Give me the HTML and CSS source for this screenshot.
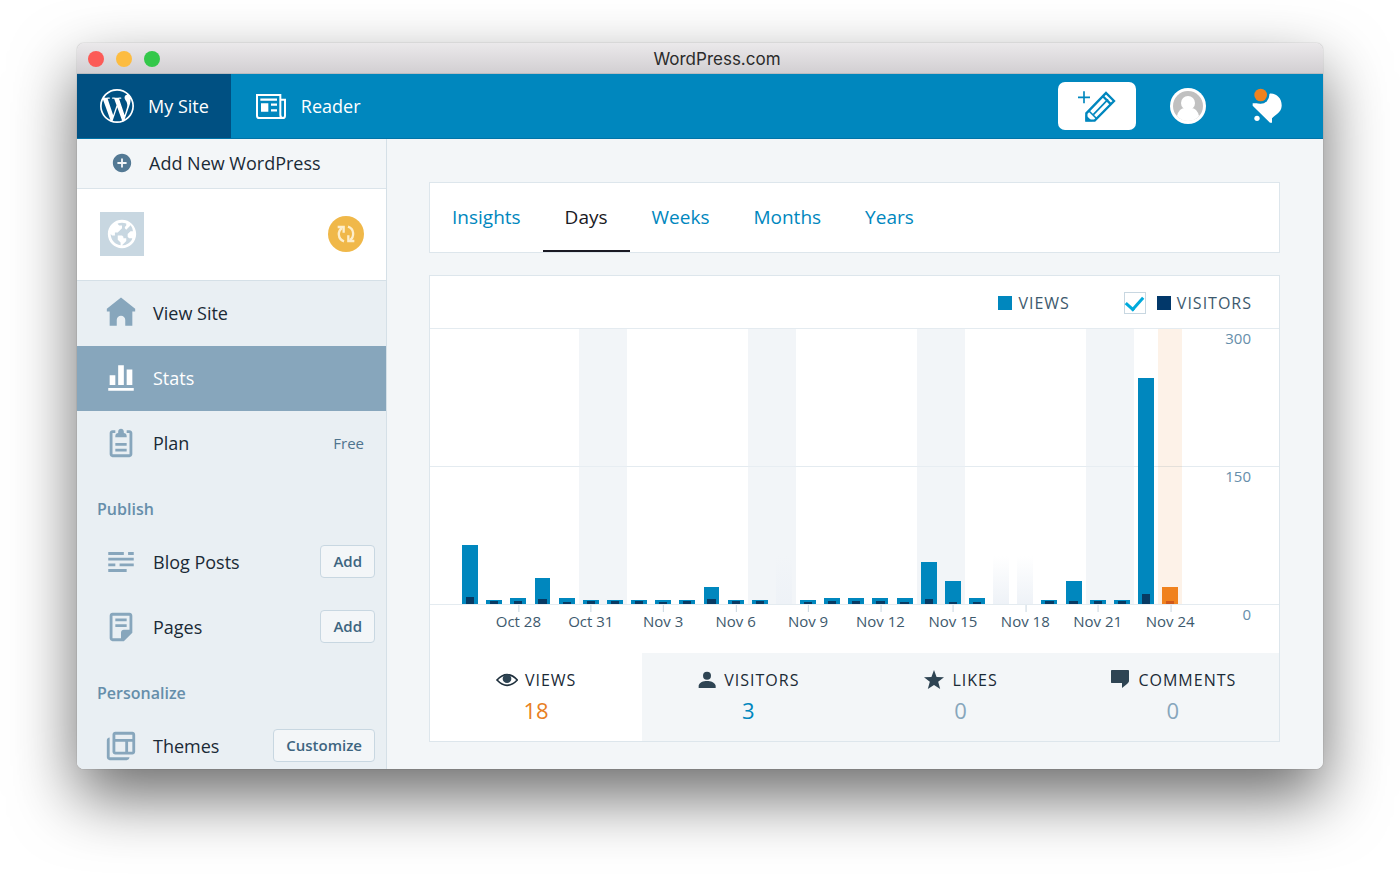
FILE: index.html
```html
<!DOCTYPE html>
<html lang="en">
<head>
    <meta charset="UTF-8">
    <meta name="viewport" content="width=device-width, initial-scale=1.0">
    <title>WordPress.com</title>
    <link rel="stylesheet" href="styles.css">
</head>
<body>
    <div class="window">
        <div class="titlebar">
            <div class="lights">
                <span class="light red"></span>
                <span class="light yellow"></span>
                <span class="light green"></span>
            </div>
            <div class="window-title">WordPress.com</div>
        </div>

        <header class="masterbar">
            <a href="#" class="master-item active">
                <svg width="34" height="34" viewBox="2 2 20 20" fill="currentColor"><path d="M12 2C6.486 2 2 6.486 2 12s4.486 10 10 10 10-4.486 10-10S17.514 2 12 2zM3.01 12c0-1.304.28-2.541.78-3.659l4.29 11.753C5.078 18.636 3.01 15.559 3.01 12zm8.99 8.99c-.882 0-1.734-.13-2.54-.366l2.697-7.838 2.763 7.57c.018.044.04.085.064.124-.934.33-1.937.51-2.984.51zm1.237-13.2c.542-.028 1.03-.085 1.03-.085.485-.057.428-.77-.056-.742 0 0-1.456.114-2.396.114-.883 0-2.37-.113-2.37-.113-.483-.03-.54.712-.055.74 0 0 .457.058.94.086l1.397 3.828-1.962 5.883-3.265-9.71c.54-.03 1.027-.086 1.027-.086.484-.057.427-.77-.057-.742 0 0-1.456.114-2.396.114-.168 0-.367-.005-.578-.01C6.1 4.63 8.864 3.01 12 3.01c2.34 0 4.47.895 6.07 2.36-.04-.003-.077-.008-.118-.008-.883 0-1.51.77-1.51 1.596 0 .74.428 1.368.883 2.11.34.6.74 1.37.74 2.48 0 .77-.297 1.663-.685 2.908l-.898 3.002-3.245-9.668zm3.28 11.98l2.745-7.937c.513-1.283.684-2.308.684-3.22 0-.33-.022-.638-.06-.924.701 1.28 1.1 2.75 1.1 4.31 0 3.313-1.796 6.207-4.469 7.77z"/></svg>
                <span>My Site</span>
            </a>
            <a href="#" class="master-item">
                <svg width="30" height="25" viewBox="0 0 90 75" fill="none" stroke="currentColor" stroke-width="6">
                    <path d="M3 3h70v59q0 10 8 10h-71q-7 0-7-7zM73 17h14v48q0 7-7 7"/>
                    <path d="M13 17h50M45 32h18M45 49h18" stroke-width="7"/>
                    <path d="M15 28h22v25h-22z" fill="currentColor" stroke="none"/>
                </svg>
                <span>Reader</span>
            </a>
            <div class="master-actions">
                <button type="button" class="new-post" aria-label="New post">
                    <svg width="40" height="34" viewBox="170 160 120 102" fill="none" stroke="currentColor" stroke-width="6">
                        <path d="M191 167v36M173 185h36" stroke-width="5"/>
                        <path d="M198 255v-22l59-61 24 24-58 59z" stroke-width="7"/>
                        <path d="M206 226l24 24" stroke-width="5"/>
                        <path d="M219 237l44-46" stroke-width="5"/>
                        <path d="M247 181l25 25" stroke-width="7"/>
                        <path d="M196 238l20 19h-20z" fill="currentColor" stroke="none"/>
                    </svg>
                </button>
                <a href="#" class="avatar" aria-label="My profile">
                    <svg width="36" height="36" viewBox="0 0 36 36">
                        <circle cx="18" cy="18" r="18" fill="#fff"/>
                        <circle cx="18" cy="18" r="15" fill="#c0c0c0"/>
                        <circle cx="18" cy="15" r="7" fill="#fff"/>
                        <path d="M7 28q2-8 8-8h6q6 0 8 8-4 5-11 5t-11-5z" fill="#fff"/>
                    </svg>
                </a>
                <a href="#" class="bell" aria-label="Notifications">
                    <svg width="30" height="36" viewBox="694 150 90 108">
                        <path d="M747 167C768 165 784 182 783 204C782 224 764 230 754 241V254H748L696 203V196H720Z" fill="#fff"/>
                        <circle cx="709" cy="241" r="8" fill="#fff"/>
                        <circle cx="720" cy="171" r="26" fill="#0087be"/>
                        <circle cx="720" cy="171" r="19" fill="#f0821e"/>
                    </svg>
                </a>
            </div>
        </header>

        <div class="layout">
            <aside class="sidebar">
                <a href="#" class="add-new">
                    <svg width="22" height="22" viewBox="0 0 24 24" fill="#537994"><path d="M12 2C6.477 2 2 6.477 2 12s4.477 10 10 10 10-4.477 10-10S17.523 2 12 2zm5 11h-4v4h-2v-4H7v-2h4V7h2v4h4v2z"/></svg>
                    <span>Add New WordPress</span>
                </a>
                <div class="site">
                    <div class="site-icon">
                        <svg width="34" height="34" viewBox="0 0 24 24" fill="#fff"><path d="M12 2C6.477 2 2 6.477 2 12s4.477 10 10 10 10-4.477 10-10S17.523 2 12 2zm0 18l2-2 1-1v-2h-2v-1l-1-1H9v3l2 2v1.931C7.06 19.436 4 16.072 4 12l1 1h2v-2h2l3-3V6h-2L9 5v-.411a7.945 7.945 0 016 0V6l-1 1v1l1 1 3.13-3.13A7.983 7.983 0 0119.736 10H18l-2 2v2l1 1h2l.286.286C18.029 18.061 15.239 20 12 20z"/></svg>
                    </div>
                    <button type="button" class="sync" aria-label="Sync">
                        <svg width="20" height="20" viewBox="798 102 60 60" fill="none" stroke="#fdeecb" stroke-width="7">
                            <path d="M822 154C802 147 803 123 816 114M834 110C854 117 853 141 840 150"/>
                            <path d="M803 111h18v17M853 153h-18v-17"/>
                        </svg>
                    </button>
                </div>
                <nav>
                    <ul class="menu">
                        <li>
                            <a href="#">
                                <svg viewBox="0 0 24 24"><path d="M22 9L12 1 2 9v2h2v10h5v-4c0-1.657 1.343-3 3-3s3 1.343 3 3v4h5V11h2V9z"/></svg>
                                View Site
                            </a>
                        </li>
                        <li class="selected">
                            <a href="#">
                                <svg viewBox="0 0 24 24"><path d="M21 21H3v-2h18v2zM8 10H4v7h4v-7zm6-7h-4v14h4V3zm6 3h-4v11h4V6z"/></svg>
                                Stats
                            </a>
                        </li>
                        <li>
                            <a href="#">
                                <svg viewBox="0 0 24 24"><path d="M16 18H8v-2h8v2zm0-6H8v2h8v-2zm2-9h-2v2h2v15H6V5h2V3H6c-1.105 0-2 .895-2 2v15c0 1.105.895 2 2 2h12c1.105 0 2-.895 2-2V5c0-1.105-.895-2-2-2zm-4 2V4c0-1.105-.895-2-2-2s-2 .895-2 2v1c-1.105 0-2 .895-2 2v1h8V7c0-1.105-.895-2-2-2z"/></svg>
                                Plan
                            </a>
                            <span class="plan-name">Free</span>
                        </li>
                    </ul>
                    <h2>Publish</h2>
                    <ul class="menu">
                        <li>
                            <a href="#">
                                <svg viewBox="0 0 24 24"><path d="M3 5h11v2H3zM17 5h4v2h-4zM3 9h18v2H3zM3 13h5v2H3zM11 13h10v2H11zM3 17h13v2H3z"/></svg>
                                Blog Posts
                            </a>
                            <button type="button" class="small-btn">Add</button>
                        </li>
                        <li>
                            <a href="#">
                                <svg viewBox="0 0 24 24"><path d="M16 8H8V6h8v2zm0 2H8v2h8v-2zm4-6v12l-6 6H6c-1.105 0-2-.895-2-2V4c0-1.105.895-2 2-2h12c1.105 0 2 .895 2 2zm-2 10V4H6v16h6v-4c0-1.105.895-2 2-2h4z"/></svg>
                                Pages
                            </a>
                            <button type="button" class="small-btn">Add</button>
                        </li>
                    </ul>
                    <h2>Personalize</h2>
                    <ul class="menu">
                        <li>
                            <a href="#">
                                <svg viewBox="0 0 24 24"><path d="M4 6c-1.105 0-2 .895-2 2v12c0 1.1.9 2 2 2h12c1.105 0 2-.895 2-2H4V6zm16-4H8c-1.105 0-2 .895-2 2v12c0 1.105.895 2 2 2h12c1.105 0 2-.895 2-2V4c0-1.105-.895-2-2-2zm-5 14H8V9h7v7zm5 0h-3V9h3v7zm0-9H8V4h12v3z"/></svg>
                                Themes
                            </a>
                            <button type="button" class="small-btn">Customize</button>
                        </li>
                    </ul>
                </nav>
            </aside>

            <main>
                <nav class="card tabs">
                    <a href="#">Insights</a>
                    <a href="#" class="current">Days</a>
                    <a href="#">Weeks</a>
                    <a href="#">Months</a>
                    <a href="#">Years</a>
                </nav>

                <section class="card">
                    <div class="legend">
                        <span class="legend-item"><i class="swatch"></i>Views</span>
                        <label class="legend-item">
                            <input type="checkbox" checked>
                            <i class="swatch dark"></i>Visitors
                        </label>
                    </div>

                    <div class="chart">
                        <div class="columns" id="columns"></div>
                        <div class="y-axis">
                            <span>300</span>
                            <span>150</span>
                            <span>0</span>
                        </div>
                    </div>

                    <div class="summary">
                        <a href="#" class="current">
                            <span class="name">
                                <svg width="22" height="22" viewBox="213 414 66 66"><path d="M216 447Q246 415 277 447Q246 479 216 447Z" fill="none" stroke="#1f303d" stroke-width="5"/><circle cx="246" cy="443" r="13" fill="#2e4453"/></svg>
                                Views
                            </span>
                            <span class="value">18</span>
                        </a>
                        <a href="#">
                            <span class="name">
                                <svg width="20" height="22" viewBox="819 414 60 66" fill="#2e4453"><circle cx="849" cy="434" r="12"/><path d="M824 471V464C826 454 838 450 849 450S872 454 875 464V471Z"/></svg>
                                Visitors
                            </span>
                            <span class="value">3</span>
                        </a>
                        <a href="#">
                            <span class="name">
                                <svg width="22" height="22" viewBox="1 1 22 22" fill="#2e4453"><path d="M12 2l2.582 6.953L22 9.257l-5.822 4.602L18.18 21 12 16.89 5.82 21l2.002-7.14L2 9.256l7.418-.304"/></svg>
                                Likes
                            </span>
                            <span class="value none">0</span>
                        </a>
                        <a href="#">
                            <span class="name">
                                <svg width="22" height="22" viewBox="1 3 22 22" fill="#2e4453"><path d="M3 5v11c0 1 .5 1 1 1h10v5l5-4c1-1 2-2 2-3V5c0-1-.5-1-1-1H4c-.5 0-1 0-1 1z"/></svg>
                                Comments
                            </span>
                            <span class="value none">0</span>
                        </a>
                    </div>
                </section>
            </main>
        </div>
    </div>

    <script>
        const MAX = 300;

        // [views, visitors], one entry per day from Oct 26 to Nov 24
        const days = [
            [64, 8], [4, 3], [7, 3], [28, 5], [7, 2], [4, 3], [4, 3], [4, 3], [4, 2], [4, 3],
            [19, 6], [4, 3], [4, 3], [0, 0], [4, 2], [7, 3], [7, 3], [7, 3], [7, 2], [46, 5],
            [25, 2], [7, 2], [0, 0], [0, 0], [4, 3], [25, 3], [4, 3], [4, 3], [247, 11], [19, 3]
        ];

        const container = document.getElementById('columns');
        const start = new Date(2016, 9, 26);

        days.forEach(([views, visitors], i) => {
            const date = new Date(start);
            date.setDate(start.getDate() + i);

            const column = document.createElement('div');
            column.className = 'column';
            if (i % 7 === 5 || i % 7 === 6) column.classList.add('weekend');
            if (i === days.length - 1) column.classList.add('today');

            if (views > 0) {
                column.innerHTML = `
                    <div class="bar views" style="height:${views / MAX * 100}%"></div>
                    <div class="bar visitors" style="height:${visitors / MAX * 100}%"></div>
                `;
            } else {
                column.innerHTML = '<div class="bar empty"></div>';
            }

            if (i % 3 === 2) {
                const month = date.toLocaleDateString('en-US', { month: 'short' });
                column.innerHTML += `<span class="day">${month} ${date.getDate()}</span>`;
            }
            container.appendChild(column);
        });
    </script>
</body>
</html>
```
FILE: styles.css
```css
* {
    box-sizing: border-box;
}
body {
    margin: 0;
    padding: 43px 77px 110px;
    background: #fff;
    color: #1a2a36;
    font-family: "Open Sans", "Noto Sans", sans-serif;
    font-size: 18px;
    line-height: 24px;
}
a {
    color: inherit;
    text-decoration: none;
}
button {
    font-family: inherit;
    cursor: pointer;
}
svg {
    display: block;
    flex-shrink: 0;
}
.window {
    display: flex;
    flex-direction: column;
    height: calc(100vh - 153px);
    border-radius: 7px;
    overflow: hidden;
    box-shadow: 0 0 1px rgba(0,0,0,0.5), 0 28px 64px rgba(0,0,0,0.58);
}

/* title bar */
.titlebar {
    display: flex;
    align-items: center;
    flex-shrink: 0;
    height: 31px;
    padding: 1px 49px 0 11px;
    background: linear-gradient(#ebe9eb, #d2cfd2);
    border-bottom: 1px solid #b9bcc0;
}
.lights {
    display: flex;
    gap: 12px;
}
.light {
    width: 16px;
    height: 16px;
    border-radius: 50%;
}
.red { background: #fc5b57; }
.yellow { background: #fdbc40; }
.green { background: #34c84a; }
.window-title {
    flex: 1;
    text-align: center;
    font-family: Inter, Roboto, sans-serif;
    font-size: 17px;
    color: #2b2b2b;
}

/* top navigation */
.masterbar {
    display: flex;
    flex-shrink: 0;
    height: 65px;
    background: #0087be;
    border-bottom: 1px solid #0074a8;
    color: #fff;
}
.master-item {
    display: flex;
    align-items: center;
    gap: 15px;
    padding: 0 22px 0 25px;
    font-weight: 500;
}
.master-item.active {
    gap: 14px;
    padding-left: 23px;
    background: #005082;
}
.master-actions {
    display: flex;
    align-items: center;
    margin-left: auto;
    padding-right: 41px;
}
.new-post {
    display: flex;
    align-items: center;
    justify-content: center;
    width: 78px;
    height: 48px;
    padding: 0;
    border: none;
    border-radius: 7px;
    background: #fff;
    color: #0087be;
}
.avatar {
    margin: 0 46px 0 34px;
}

/* sidebar */
.layout {
    display: flex;
    flex: 1;
    min-height: 0;
    background: #f3f6f8;
}
.sidebar {
    width: 310px;
    flex-shrink: 0;
    overflow: hidden;
    background: #e9eff3;
    border-right: 1px solid #d5e0e7;
}
.add-new {
    display: flex;
    align-items: center;
    gap: 16px;
    height: 50px;
    padding: 0 0 2px 34px;
    background: #f3f6f8;
    border-bottom: 1px solid #dbe4ea;
}
.site {
    display: flex;
    align-items: center;
    justify-content: space-between;
    height: 92px;
    padding: 0 22px 2px 23px;
    background: #fff;
    border-bottom: 1px solid #d5e0e7;
}
.site-icon, .sync {
    display: flex;
    align-items: center;
    justify-content: center;
}
.site-icon {
    width: 44px;
    height: 44px;
    background: #c8d7e1;
}
.sync {
    width: 36px;
    height: 36px;
    padding: 0;
    border: none;
    border-radius: 50%;
    background: #f0b849;
}
.menu {
    margin: 0;
    padding: 0;
    list-style: none;
}
.menu li {
    display: flex;
    align-items: center;
    height: 65px;
    padding: 0 11px 2px 0;
}
.menu a {
    display: flex;
    flex: 1;
    align-items: center;
    gap: 15px;
    height: 100%;
    padding-left: 27px;
}
.menu svg {
    width: 34px;
    height: 34px;
    fill: #87a6bc;
}
.menu .selected {
    background: #87a6bc;
    color: #fff;
    font-weight: 500;
}
.menu .selected svg {
    fill: #fff;
}
.plan-name {
    padding-right: 11px;
    font-size: 15px;
    color: #4f748e;
}
.sidebar h2 {
    margin: 0;
    padding: 21px 20px 9px;
    font-size: 16px;
    font-weight: 600;
    color: #668eaa;
}
.small-btn {
    height: 33px;
    padding: 0 12px 2px;
    border: 1px solid #c8d7e1;
    border-radius: 4px;
    background: #f3f6f8;
    color: #3d6580;
    font-size: 15px;
    font-weight: 600;
}

/* content */
main {
    flex: 1;
    min-width: 0;
    padding: 43px 43px 0 42px;
}
.card {
    background: #fff;
    border: 1px solid #dde6ec;
}
.tabs {
    display: flex;
    height: 71px;
    margin-bottom: 22px;
    font-size: 19px;
    color: #0087be;
}
.tabs a {
    display: flex;
    align-items: center;
    padding: 0 22px;
    border-bottom: 2px solid transparent;
}
.tabs .current {
    color: #1a1a24;
    border-color: #1a1a24;
}
.legend {
    display: flex;
    justify-content: flex-end;
    gap: 54px;
    height: 52px;
    padding: 2px 27px 0 0;
    font-size: 16px;
    letter-spacing: 1px;
    text-transform: uppercase;
    color: #3d596d;
}
.legend-item {
    display: flex;
    align-items: center;
}
.legend input {
    appearance: none;
    display: flex;
    align-items: center;
    justify-content: center;
    width: 22px;
    height: 22px;
    margin: 0 11px 0 0;
    border: 1px solid #c8d7e1;
    background: #fff;
}
.legend input:checked::before {
    content: "";
    width: 8px;
    height: 14px;
    margin-bottom: 4px;
    border: solid #00aadc;
    border-width: 0 3px 3px 0;
    transform: rotate(42deg);
}
.swatch {
    width: 14px;
    height: 14px;
    margin-right: 6px;
    background: #0087be;
}
.swatch.dark {
    background: #02386a;
}

.chart {
    display: flex;
    height: 277px;
    margin-bottom: 48px;
    padding-left: 28px;
    border-top: 1px solid #e4ebf0;
    border-bottom: 1px solid #e4ebf0;
    background: linear-gradient(#e4ebf0, #e4ebf0) 0 137px / 100% 1px no-repeat;
}
.columns {
    display: flex;
    flex: 1;
}
.column {
    flex: 1;
    position: relative;
}
.column.weekend {
    background: rgba(233, 239, 243, 0.6);
}
.column.today {
    background: rgba(240, 130, 30, 0.1);
}
/* bars sit on top of each other, anchored to the baseline */
.bar {
    position: absolute;
    bottom: 0;
    left: 17%;
    right: 17%;
    background: #0087be;
}
.bar.visitors {
    left: 33%;
    right: 33%;
    background: #083a63;
}
.bar.empty {
    height: 48px;
    background: linear-gradient(transparent, #eef2f7);
}
.today .views {
    background: #f0821e;
}
.today .visitors {
    background: #d0591b;
}
.day {
    position: absolute;
    top: 100%;
    left: 50%;
    transform: translateX(-50%);
    padding-top: 5px;
    font-size: 15px;
    white-space: nowrap;
    color: #3d596d;
}
.day::before {
    content: "";
    position: absolute;
    top: 1px;
    left: 50%;
    width: 1px;
    height: 7px;
    background: #c8d7e1;
}
.y-axis {
    display: flex;
    flex-direction: column;
    justify-content: space-between;
    width: 97px;
    height: 294px;
    padding-right: 28px;
    text-align: right;
    font-size: 15px;
    line-height: 18px;
    color: #668eaa;
}

.summary {
    display: grid;
    grid-template-columns: repeat(4, 1fr);
    background: #f3f6f8;
}
.summary a {
    display: flex;
    flex-direction: column;
    align-items: center;
    gap: 4px;
    height: 88px;
    padding-top: 15px;
}
.summary .name {
    display: flex;
    align-items: center;
    gap: 7px;
    font-size: 16px;
    letter-spacing: 1px;
    text-transform: uppercase;
}
.summary .value {
    font-size: 22px;
    line-height: 28px;
    color: #0087be;
}
.summary .current {
    background: #fff;
}
.summary .current .value {
    color: #e8801f;
}
.summary .value.none {
    color: #87a6bc;
}
```
